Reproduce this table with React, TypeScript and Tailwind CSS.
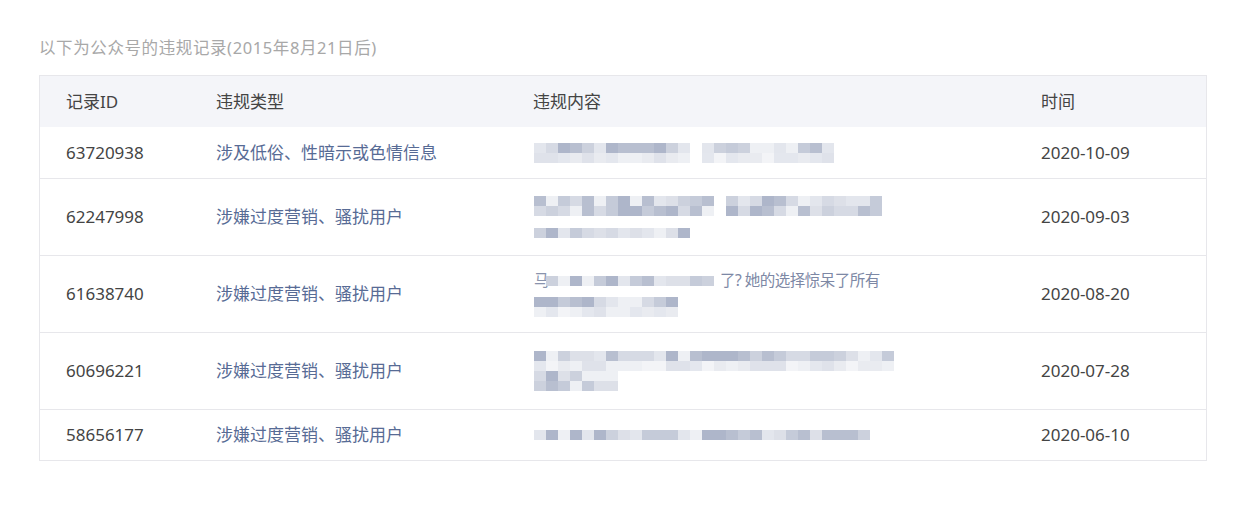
import React from "react";

const PALETTE = [
  "bg-[#c5cbd9]",
  "bg-[#d6dae4]",
  "bg-[#e3e6ed]",
  "bg-[#b8bfd0]",
  "bg-[#eef0f4]",
  "bg-[#ccd1dd]",
  "bg-[#dde0e8]",
  "bg-[#aeb6ca]",
];
const LIGHT = [
  "bg-[#e4e7ee]",
  "bg-[#eef0f4]",
  "bg-[#f3f4f7]",
  "bg-[#dfe2ea]",
  "bg-[#e9ebf0]",
];

function seeded(seed: number) {
  let s = seed;
  return () => {
    s = (s * 9301 + 49297) % 233280;
    return s / 233280;
  };
}

type Seg = { w: number; gap?: number };

function MosaicLine({
  segs,
  seed,
  rows = 2,
  light = false,
}: {
  segs: Seg[];
  seed: number;
  rows?: number;
  light?: boolean;
}) {
  const rnd = seeded(seed);
  return (
    <div className="flex">
      {segs.map((seg, i) => {
        const cols = Math.round(seg.w / 12);
        return (
          <div key={i} className="flex flex-col" style={{ marginLeft: seg.gap ?? 0 }}>
            {Array.from({ length: rows }).map((_, r) => (
              <div key={r} className="flex">
                {Array.from({ length: cols }).map((_, c) => {
                  const pal = r === rows - 1 && light ? LIGHT : PALETTE;
                  const cls = pal[Math.floor(rnd() * pal.length)];
                  return <div key={c} className={`w-[12px] h-[10px] ${cls}`} />;
                })}
              </div>
            ))}
          </div>
        );
      })}
    </div>
  );
}

type Row = {
  id: string;
  type: string;
  time: string;
  tall: boolean;
  content: React.ReactNode;
};

const rows: Row[] = [
  {
    id: "63720938",
    type: "涉及低俗、性暗示或色情信息",
    time: "2020-10-09",
    tall: false,
    content: (
      <div className="flex flex-col">
        <MosaicLine segs={[{ w: 156 }, { w: 132, gap: 12 }]} seed={3} light />
      </div>
    ),
  },
  {
    id: "62247998",
    type: "涉嫌过度营销、骚扰用户",
    time: "2020-09-03",
    tall: true,
    content: (
      <div className="flex flex-col gap-[12px]">
        <MosaicLine segs={[{ w: 180 }, { w: 156, gap: 12 }]} seed={7} />
        <MosaicLine segs={[{ w: 156 }]} seed={11} rows={1} />
      </div>
    ),
  },
  {
    id: "61638740",
    type: "涉嫌过度营销、骚扰用户",
    time: "2020-08-20",
    tall: true,
    content: (
      <div className="flex flex-col gap-[6px]">
        <div className="flex items-center h-[20px] text-[15.5px]">
          <span className="text-[#8a94ad] w-[12px]">马</span>
          <MosaicLine segs={[{ w: 168 }]} seed={13} rows={1} />
          <span className="ml-[6px] text-[#7d88a5] tracking-[-0.5px]">了? 她的选择惊呆了所有</span>
        </div>
        <MosaicLine segs={[{ w: 144 }]} seed={17} light />
      </div>
    ),
  },
  {
    id: "60696221",
    type: "涉嫌过度营销、骚扰用户",
    time: "2020-07-28",
    tall: true,
    content: (
      <div className="flex flex-col">
        <MosaicLine segs={[{ w: 360 }]} seed={19} light />
        <MosaicLine segs={[{ w: 84 }]} seed={23} />
      </div>
    ),
  },
  {
    id: "58656177",
    type: "涉嫌过度营销、骚扰用户",
    time: "2020-06-10",
    tall: false,
    content: (
      <div className="flex flex-col">
        <MosaicLine segs={[{ w: 336 }]} seed={29} rows={1} />
      </div>
    ),
  },
];

export default function App() {
  return (
    <div
      className="w-[1238px] h-[526px] bg-white pl-[39px] pt-[36px]"
      style={{ fontFamily: '"Noto Sans", "Noto Sans CJK SC", sans-serif' }}
    >
      <div className="text-[16.5px] leading-[24px] text-[#a8a8a8] tracking-[0.6px]">
        以下为公众号的违规记录(2015年8月21日后)
      </div>
      <div className="mt-[15px] w-[1168px] border border-[#e7e7eb] text-[17px] text-[#444444]">
        <div className="flex items-center h-[51px] bg-[#f4f5f9]">
          <div className="w-[150px] pl-[26px]">记录ID</div>
          <div className="w-[317px] pl-[26px]">违规类型</div>
          <div className="w-[508px] pl-[26px]">违规内容</div>
          <div className="flex-1 pl-[26px]">时间</div>
        </div>
        {rows.map((r, i) => (
          <div
            key={r.id}
            className={`flex items-center border-t border-[#e7e7eb] ${
              r.tall ? "h-[77px]" : "h-[51px]"
            } ${i === 0 ? "border-t-0" : ""}`}
          >
            <div className="w-[150px] pl-[26px]">{r.id}</div>
            <div className="w-[317px] pl-[26px] text-[#576b95]">{r.type}</div>
            <div className="w-[508px] pl-[27px]">{r.content}</div>
            <div className="flex-1 pl-[26px]">{r.time}</div>
          </div>
        ))}
      </div>
    </div>
  );
}
